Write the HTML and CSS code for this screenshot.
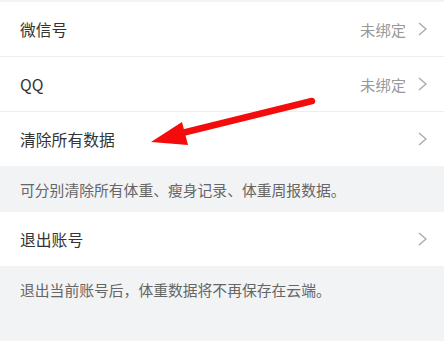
FILE: index.html
```html
<!DOCTYPE html>
<html lang="zh-CN">
<head>
<meta charset="utf-8">
<link rel="stylesheet" href="styles.css">
</head>
<body>
<div class="page">
  <div class="group">
    <div class="cell">
      <span class="label">微信号</span>
      <span class="right"><span class="value">未绑定</span><svg class="chev" viewBox="0 0 9 14"><path d="M1 1 L8 7 L1 13" fill="none" stroke="#a8a8a8" stroke-width="1.3"/></svg></span>
    </div>
    <div class="cell">
      <span class="label">QQ</span>
      <span class="right"><span class="value">未绑定</span><svg class="chev" viewBox="0 0 9 14"><path d="M1 1 L8 7 L1 13" fill="none" stroke="#a8a8a8" stroke-width="1.3"/></svg></span>
    </div>
    <div class="cell last">
      <span class="label">清除所有数据</span>
      <span class="right"><svg class="chev" viewBox="0 0 9 14"><path d="M1 1 L8 7 L1 13" fill="none" stroke="#a8a8a8" stroke-width="1.3"/></svg></span>
    </div>
  </div>
  <div class="note">可分别清除所有体重、瘦身记录、体重周报数据。</div>
  <div class="group">
    <div class="cell last">
      <span class="label">退出账号</span>
      <span class="right"><svg class="chev" viewBox="0 0 9 14"><path d="M1 1 L8 7 L1 13" fill="none" stroke="#a8a8a8" stroke-width="1.3"/></svg></span>
    </div>
  </div>
  <div class="note">退出当前账号后，体重数据将不再保存在云端。</div>
  <svg class="arrow" viewBox="0 0 444 341" width="444" height="341">
    <line x1="312" y1="101" x2="178" y2="134" stroke="#f40b0b" stroke-width="6.5" stroke-linecap="round"/>
    <polygon points="151,142 182,122 188,145" fill="#f40b0b"/>
  </svg>
</div>
</body>
</html>
```
FILE: styles.css
```css
* { box-sizing: border-box; }
html, body {
  margin: 0;
  padding: 0;
  background: #f2f3f5;
}
.page {
  position: relative;
  width: 444px;
  height: 341px;
  padding-top: 2px;
  font-family: "Noto Sans CJK SC", "Noto Sans", sans-serif;
  overflow: hidden;
}
.group {
  background: #fff;
}
.cell {
  height: 55px;
  display: flex;
  align-items: center;
  justify-content: space-between;
  padding: 0 17px 0 20px;
  border-bottom: 1px solid #efefef;
}
.cell.last {
  height: 54px;
  border-bottom: none;
}
.label {
  font-size: 15.8px;
  color: #333;
}
.right {
  display: flex;
  align-items: center;
  gap: 12px;
}
.value {
  font-size: 15.3px;
  color: #999;
}
.chev {
  width: 9px;
  height: 14px;
  display: block;
}
.note {
  font-size: 14.8px;
  color: #666;
  padding: 0 20px;
  height: 46px;
  display: flex;
  align-items: center;
}
.arrow {
  position: absolute;
  left: 0;
  top: 0;
  pointer-events: none;
}
```
